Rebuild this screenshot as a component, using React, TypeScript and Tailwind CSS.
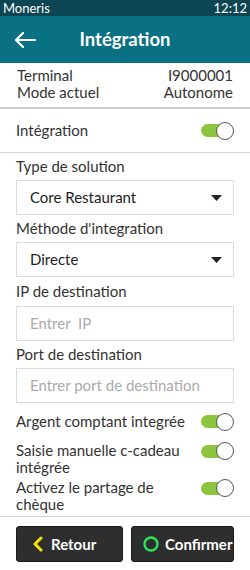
import React from 'react';

function Toggle() {
  return (
    <div className="relative w-[33px] h-[18px] shrink-0 flex items-center">
      <div className="w-[30px] h-[13px] rounded-full bg-[#8cc63f]" />
      <div className="absolute right-0 top-0 w-[18px] h-[18px] rounded-full bg-white border-[1.5px] border-[#555]" />
    </div>
  );
}

function Caret() {
  return (
    <svg width="11" height="6" viewBox="0 0 11 6" className="shrink-0">
      <path d="M0 0 L11 0 L5.5 6 Z" fill="#222" />
    </svg>
  );
}

export default function App() {
  return (
    <div className="w-[250px] h-[570px] bg-white flex flex-col overflow-hidden text-[#333] font-['Lato','Noto_Sans',sans-serif]">
      <div className="h-[16px] bg-[#0c4652] text-white text-[13px] leading-[16px] flex items-center justify-between px-[3px]">
        <span>Moneris</span>
        <span>12:12</span>
      </div>

      <div className="h-[47px] bg-[#0a7083] grid grid-cols-[50px_1fr_50px] items-center">
        <svg width="22" height="16" viewBox="0 0 22 16" className="ml-[14px]">
          <path d="M21 8 H2 M9 1 L2 8 L9 15" stroke="white" strokeWidth="2.2" fill="none" strokeLinecap="round" strokeLinejoin="round" />
        </svg>
        <div className="text-center text-white font-bold text-[18.5px]">Intégration</div>
        <div />
      </div>

      <div className="px-[17px] pt-[4px] pb-[6px] text-[15px] leading-[17px]">
        <div className="flex justify-between">
          <span>Terminal</span>
          <span>I9000001</span>
        </div>
        <div className="flex justify-between">
          <span>Mode actuel</span>
          <span>Autonome</span>
        </div>
      </div>
      <div className="h-[2px] bg-[#cfcfcf]" />

      <div className="h-[43px] px-[16px] flex items-center justify-between text-[15px]">
        <span>Intégration</span>
        <Toggle />
      </div>
      <div className="h-[1px] bg-[#d6d6d6]" />

      <div className="px-[16px] text-[15px]">
        <div className="h-[27px] flex items-center">Type de solution</div>
        <div className="h-[35px] border border-[#dcdcdc] flex items-center justify-between pl-[13px] pr-[11px] text-[#222]">
          <span>Core Restaurant</span>
          <Caret />
        </div>
        <div className="h-[27px] flex items-center">Méthode d'integration</div>
        <div className="h-[35px] border border-[#dcdcdc] flex items-center justify-between pl-[13px] pr-[11px] text-[#222]">
          <span>Directe</span>
          <Caret />
        </div>
        <div className="h-[29px] flex items-center">IP de destination</div>
        <div className="h-[35px] border border-[#dcdcdc] flex items-center pl-[13px] text-[#aaa]">
          Entrer&nbsp; IP
        </div>
        <div className="h-[27px] flex items-center">Port de destination</div>
        <div className="h-[35px] border border-[#dcdcdc] flex items-center pl-[13px] text-[#aaa]">
          Entrer port de destination
        </div>

        <div className="h-[37px] flex items-center justify-between">
          <span>Argent comptant integrée</span>
          <Toggle />
        </div>
        <div className="h-[37px] flex items-center justify-between">
          <div className="leading-[17px]">
            Saisie manuelle c-cadeau
            <br />
            intégrée
          </div>
          <div className="self-start mt-[2px]">
            <Toggle />
          </div>
        </div>
        <div className="h-[37px] flex items-center justify-between">
          <div className="leading-[17px]">
            Activez le partage de
            <br />
            chèque
          </div>
          <div className="self-start mt-[2px]">
            <Toggle />
          </div>
        </div>
      </div>

      <div className="h-[1px] bg-[#d6d6d6] mt-[2px]" />
      <div className="px-[16px] pt-[9px] flex gap-[8px]">
        <button className="flex-1 h-[36px] rounded-[3px] bg-[#2e2e2e] border border-[#1a1a1a] flex items-center gap-[8px] pl-[15px] text-white font-bold text-[15px]">
          <svg width="11" height="16" viewBox="0 0 11 16">
            <path d="M9 2 L3 8 L9 14" stroke="#f2e600" strokeWidth="3" fill="none" strokeLinecap="round" strokeLinejoin="round" />
          </svg>
          Retour
        </button>
        <button className="flex-1 h-[36px] rounded-[3px] bg-[#2e2e2e] border border-[#1a1a1a] flex items-center gap-[6px] pl-[11px] text-white font-bold text-[15px]">
          <svg width="16" height="16" viewBox="0 0 16 16">
            <circle cx="8" cy="8" r="6.5" stroke="#2ee25a" strokeWidth="2.4" fill="none" />
          </svg>
          Confirmer
        </button>
      </div>
    </div>
  );
}
